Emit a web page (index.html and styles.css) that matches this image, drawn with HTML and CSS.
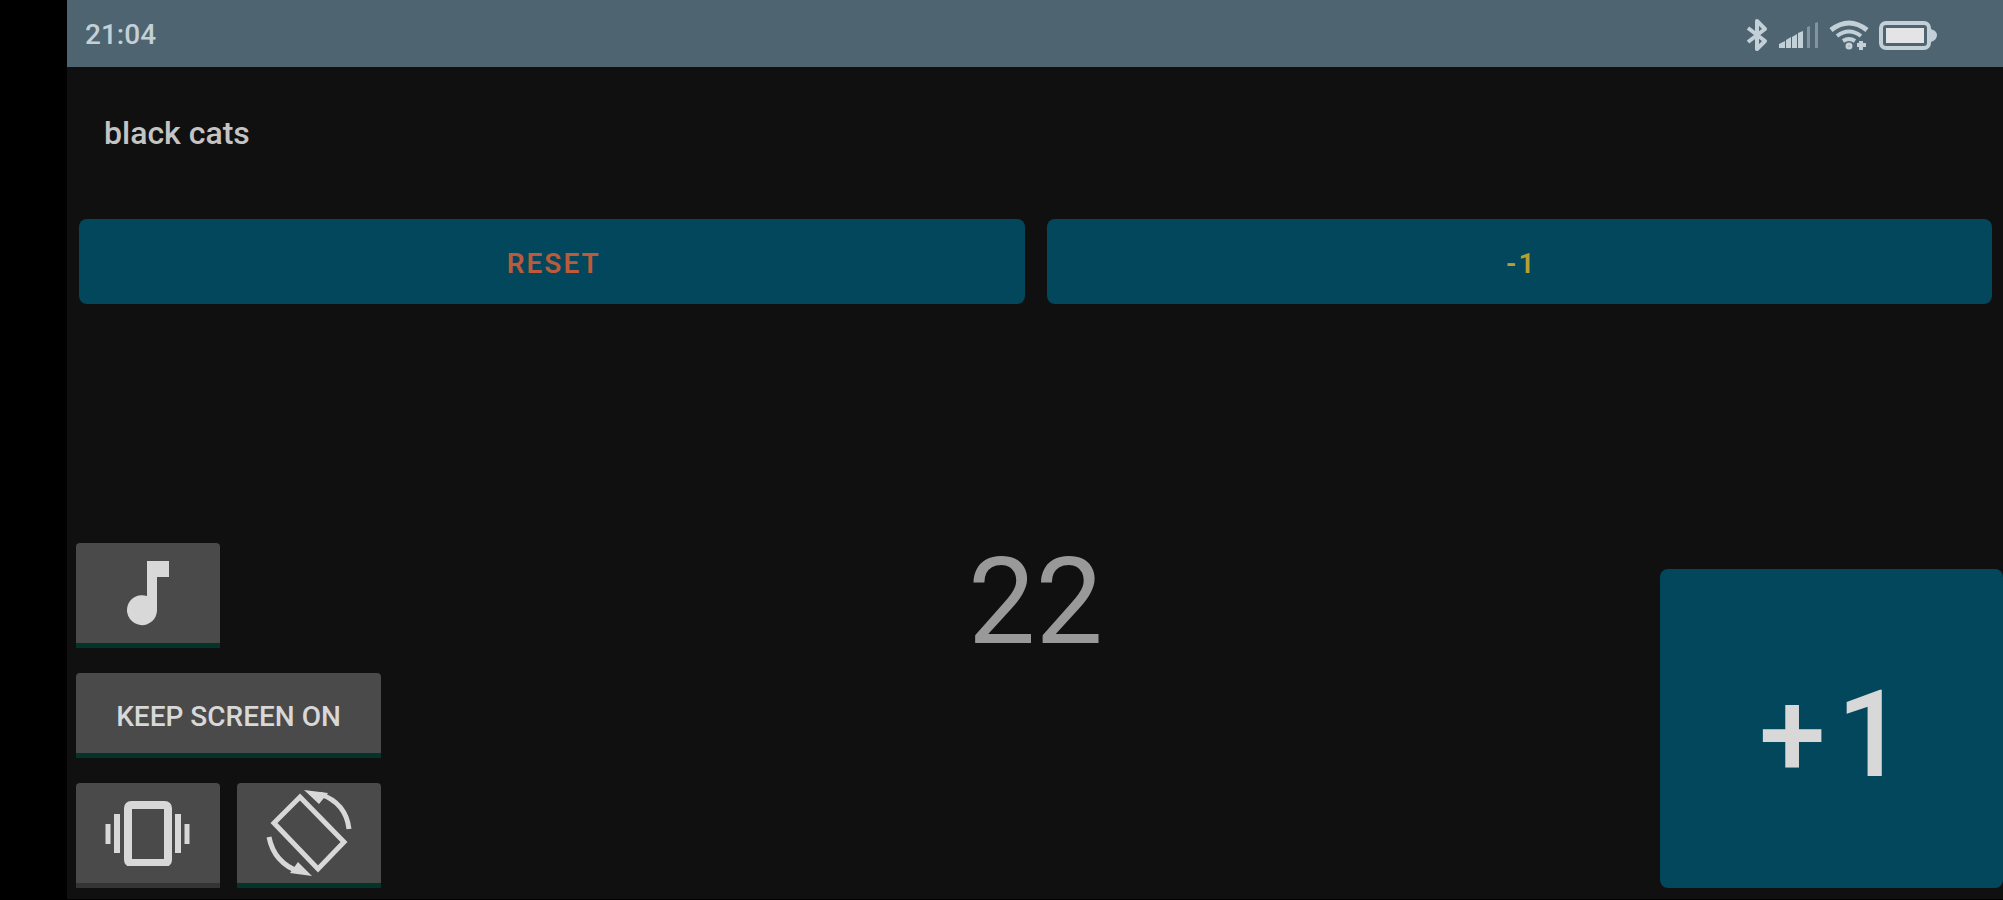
FILE: index.html
```html
<!DOCTYPE html>
<html lang="en">
<head>
    <meta charset="UTF-8">
    <meta name="viewport" content="width=device-width, initial-scale=1.0">
    <title>Counter</title>
    <link rel="stylesheet" href="styles.css">
</head>
<body>
    <div class="screen">
        <header class="status-bar">
            <time>21:04</time>
            <div class="status-icons">
                <svg width="24" height="36" viewBox="0 0 24 36" fill="none" stroke="currentColor" stroke-width="4" stroke-linejoin="round">
                    <path d="M3 11 L20 24 L12 32 V4 L20 12 L3 25"/>
                </svg>
                <svg width="40" height="28" viewBox="0 0 40 28" fill="currentColor">
                    <path d="M0 23 L6 20 V27 H0z M7 19 L12 16 V27 H7z M13 16 L18 13 V27 H13z M19 12 L24 10 V27 H19z"/>
                    <path d="M28 6 L31 5 V27 H28z M36 2 L39 1 V27 H36z" opacity="0.45"/>
                </svg>
                <svg width="40" height="32" viewBox="0 0 40 32" fill="none" stroke="currentColor" stroke-width="5">
                    <path d="M2 11 Q20 -3 38 11"/>
                    <path d="M8 17 Q20 8 32 17" stroke-width="4"/>
                    <path d="M14 22 Q20 18 26 22" stroke-width="4"/>
                    <circle cx="20" cy="27" r="2" stroke-width="3"/>
                    <path d="M28 26 H37 M32 22 V31" stroke-width="4"/>
                </svg>
                <svg width="58" height="30" viewBox="0 0 58 30" fill="none">
                    <rect x="2" y="3" width="48" height="25" rx="5" stroke="currentColor" stroke-width="4"/>
                    <rect x="7" y="8" width="38" height="15" fill="#e4e4e6"/>
                    <path d="M52 9 Q58 11 58 15 Q58 20 52 22z" fill="currentColor"/>
                </svg>
            </div>
        </header>

        <input class="counter-name" type="text" value="black cats" aria-label="Counter name">

        <div class="actions">
            <button class="btn reset" type="button" onclick="setCount(0)">RESET</button>
            <button class="btn minus" type="button" onclick="setCount(count - 1)">-1</button>
        </div>

        <main class="counter">
            <div class="toggles">
                <button class="toggle on" type="button" aria-label="Sound" onclick="toggle(this)">
                    <svg width="44" height="66" viewBox="0 0 44 66" fill="currentColor">
                        <path d="M21 1 H43 V17 H31 V50 A15 15 0 1 1 21 36z"/>
                    </svg>
                </button>
                <button class="toggle text on" type="button" onclick="toggle(this)">KEEP SCREEN ON</button>
                <div class="toggle-row">
                    <button class="toggle" type="button" aria-label="Vibrate" onclick="toggle(this)">
                        <svg width="86" height="66" viewBox="0 0 86 66" fill="none" stroke="currentColor">
                            <rect x="23" y="5" width="40" height="58" rx="3" stroke-width="8"/>
                            <path d="M12 14 V53 M73 14 V53" stroke-width="6"/>
                            <path d="M3 24 V44 M82 24 V44" stroke-width="5"/>
                        </svg>
                    </button>
                    <button class="toggle on" type="button" aria-label="Rotate screen" onclick="toggle(this)">
                        <svg width="86" height="88" viewBox="0 0 86 88" fill="none" stroke="currentColor" stroke-width="5">
                            <path d="M34 8 L78 53 L52 80 L8 34z"/>
                            <path d="M54 5 Q80 14 83 40 M3 48 Q8 74 34 83"/>
                            <path d="M38 1 L62 4 L53 15z M46 87 L24 84 L32 73z" fill="currentColor" stroke="none"/>
                        </svg>
                    </button>
                </div>
            </div>

            <output class="count" id="count">22</output>

            <button class="btn plus" type="button" onclick="setCount(count + 1)">+1</button>
        </main>
    </div>

    <script>
        let count = 22;

        function setCount(value) {
            count = value;
            document.getElementById('count').innerText = count;
        }

        function toggle(button) {
            button.classList.toggle('on');
        }
    </script>
</body>
</html>
```

FILE: styles.css
```css
* {
    box-sizing: border-box;
}

body {
    margin: 0;
    padding-left: 67px;
    background-color: #000;
    color: #d6d6d6;
    font-family: Roboto, sans-serif;
}

.screen {
    display: flex;
    flex-direction: column;
    min-height: 100vh;
    background-color: #101010;
    border-bottom: 1px solid #000;
}

.status-bar {
    display: flex;
    justify-content: space-between;
    align-items: center;
    height: 67px;
    padding: 2px 66px 0 18px;
    background-color: #4e6470;
    color: #c3d0d8;
    font-size: 28px;
    font-weight: 500;
}

.status-icons {
    display: flex;
    align-items: center;
    gap: 10px;
}

.counter-name {
    height: 132px;
    padding: 0 37px;
    border: none;
    background: none;
    color: #c4c4c4;
    font: 500 32px Roboto, sans-serif;
    outline: none;
}

.actions {
    display: grid;
    grid-template-columns: 1fr 1fr;
    gap: 22px;
    padding: 20px 11px 0 12px;
}

.btn {
    border: none;
    border-radius: 8px;
    background-color: #03475c;
    font-family: Roboto, sans-serif;
    font-weight: 500;
    cursor: pointer;
}

.actions .btn {
    height: 85px;
    padding: 4px 0 0 4px;
    font-size: 28px;
    font-weight: 600;
    letter-spacing: 2px;
}

.reset {
    color: #bc5a3c;
}

.minus {
    color: #b8a030;
}

.counter {
    flex: 1;
    display: grid;
    grid-template-columns: 1fr auto 1fr;
    align-items: end;
    padding: 0 0 11px 9px;
}

.toggles {
    display: flex;
    flex-direction: column;
    align-items: flex-start;
    gap: 25px;
}

.toggle-row {
    display: flex;
    gap: 17px;
}

.toggle {
    display: flex;
    justify-content: center;
    align-items: center;
    width: 144px;
    height: 105px;
    padding: 0;
    border: none;
    border-bottom: 5px solid #343435;
    border-radius: 4px 4px 0 0;
    background-color: #4a4a4b;
    color: #d8d8d8;
    font: 500 28px Roboto, sans-serif;
    cursor: pointer;
}

.toggle.text {
    width: 305px;
    height: 85px;
    padding-top: 6px;
}

.toggle.on {
    border-bottom-color: #033429;
}

.count {
    align-self: center;
    padding: 12px 8px 0 0;
    color: #999;
    font-size: 120px;
}

.plus {
    justify-self: end;
    width: 343px;
    height: 319px;
    padding: 12px 0 0 12px;
    color: #d8d8d8;
    font-size: 120px;
    letter-spacing: 11px;
}
```
